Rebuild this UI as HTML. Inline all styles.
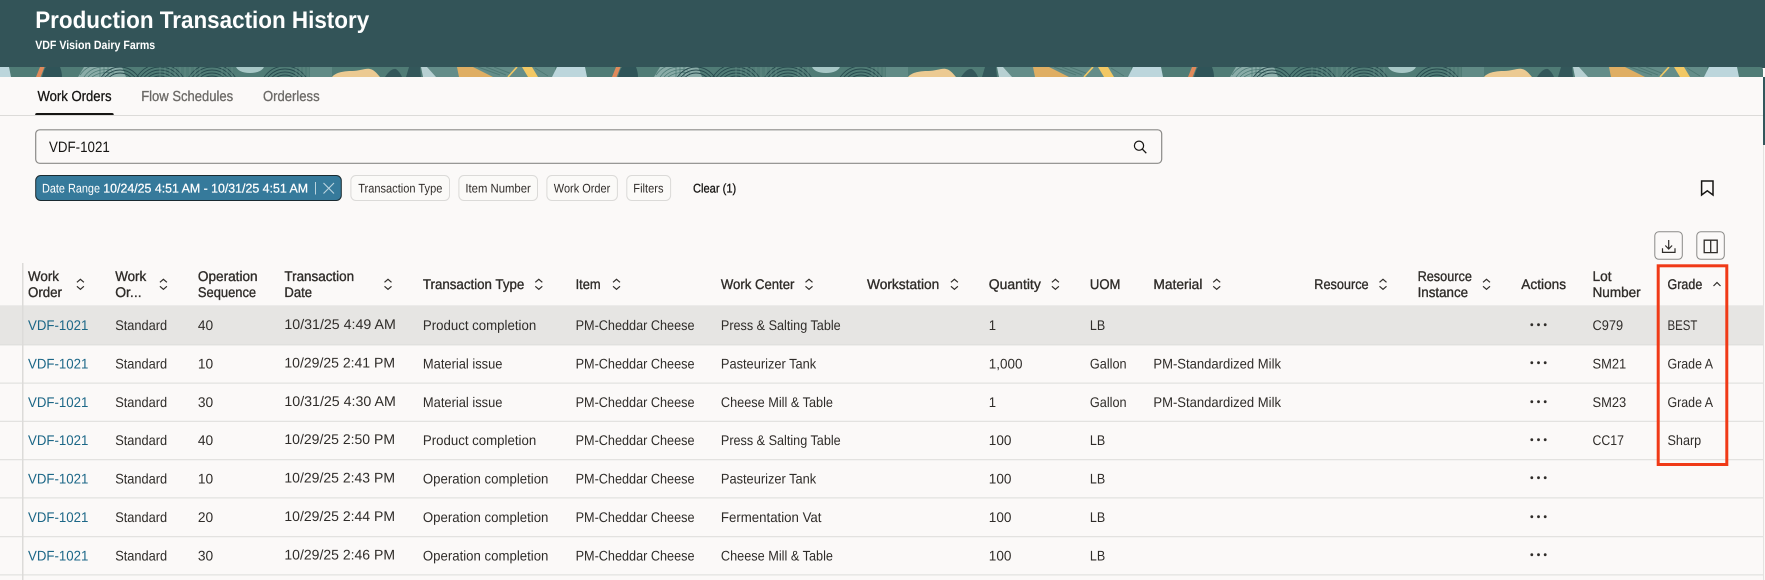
<!DOCTYPE html>
<html lang="en">
<head>
<meta charset="utf-8">
<title>Production Transaction History</title>
<style>
html,body{margin:0;padding:0;width:1765px;height:580px;overflow:hidden;background:#fbf9f8}
svg{display:block;position:absolute;left:0;top:0}
text{font-family:"Liberation Sans",sans-serif;font-size:14px;fill:#2f2c29;text-rendering:geometricPrecision}
.l{fill:#1c6787}
.h{stroke:#2f2c29;stroke-width:.35px}
.c{font-size:12.5px;fill:#312d2a}
.w{font-size:12.5px;fill:#fff}
.tab{font-size:14.5px;fill:#6b6966;stroke:#6b6966;stroke-width:.3px}
.ic{fill:none;stroke:#2f2c29;stroke-width:1.2}
</style>
</head>
<body>
<svg width="1765" height="580" viewBox="0 0 1765 580" xmlns="http://www.w3.org/2000/svg">
<defs>
<pattern id="bd" patternUnits="userSpaceOnUse" x="0" y="67" width="576" height="10">
<rect width="576" height="10" fill="#507c76"/>
<rect x="310" width="22" height="10" fill="#618b86"/>
<rect x="425" width="130" height="10" fill="#648d89"/>
<path d="M78 10 L84 0 H122 L126 10Z" fill="#8aaca8"/>
<g fill="none" stroke="#4f7c77" stroke-width=".8"><path d="M84 10Q92 -2 110 0M88 10Q96 1 112 3M92 10Q100 4 114 6M80 8Q88 -3 100 -2"/><path d="M100 0v10M104 0v10M108 0v10"/></g>
<g fill="none" stroke="#274a4e" stroke-width=".9"><circle cx="120" cy="22" r="16"/><circle cx="120" cy="22" r="19"/><circle cx="120" cy="22" r="22"/></g>
<g fill="none" stroke="#264a4e" stroke-width=".9"><circle cx="160" cy="24" r="15"/><circle cx="160" cy="24" r="18"/><circle cx="160" cy="24" r="21"/><circle cx="160" cy="24" r="24"/><circle cx="160" cy="24" r="27"/><circle cx="212" cy="24" r="15"/><circle cx="212" cy="24" r="18"/><circle cx="212" cy="24" r="21"/><circle cx="212" cy="24" r="24"/><circle cx="212" cy="24" r="27"/><circle cx="285" cy="24" r="16"/><circle cx="285" cy="24" r="19"/><circle cx="285" cy="24" r="22"/><circle cx="285" cy="24" r="25"/></g>
<g fill="none" stroke="#6f958f" stroke-width=".5"><path d="M160 0v10M165 0v10M170 0v10M175 0v10M180 0v10M185 0v10M190 0v10M195 0v10M200 0v10M222 0v10M227 0v10M232 0v10"/><path d="M296 0v10M300 0v10M304 0v10M308 0v10"/></g>
<ellipse cx="250" cy="-1" rx="14" ry="7" fill="#a7c7c6"/>
<path d="M36 10 L40 0 H44.500 L40.600 10Z" fill="#e08a5b"/>
<path d="M42 10 Q44 2 46 0 H60 Q62 5 62 10Z" fill="#2f5458"/>
<path d="M332 10 C336 5 345 4 352 4 C360 4 365 1 370 2 C375 3 378 8 380 10Z" fill="#ecca92"/>
<path d="M385 10 Q391 1 396 2 Q400 5 402 10Z" fill="#33575a"/>
<path d="M406 10 L409 0 H420 L421 10Z" fill="#33575a"/>
<path d="M421 0 H427 L436 10 H423Z" fill="#b7d0d2"/>
<path d="M457 0 H473 L493 10 H459Z" fill="#dfae63"/>
<g stroke="#4f7a75" stroke-width="1" fill="none"><path d="M478 0 L500 8M486 0 L506 8M494 0 L512 7M535 1 L548 9"/></g>
<path d="M517 0 L508 10" stroke="#f2c864" stroke-width="1.600" fill="none"/>
<path d="M522 0 H532 L538 10 H528Z" fill="#f2c864"/>
<path d="M557 0 H585 L587 10 H552Z" fill="#bcd6dc"/>
<path d="M-19 0 H9 L11 10 H-24Z" fill="#bcd6dc"/>
</pattern>
<g id="s"><path d="M-3.500 -2 L0 -5 L3.500 -2 M-3.500 2 L0 5 L3.500 2" class="ic" stroke-width="1.100"/></g>
<g id="d" fill="#2f2c29"><circle cx="1531.800" cy="0" r="1.400"/><circle cx="1538.500" cy="0" r="1.400"/><circle cx="1545.200" cy="0" r="1.400"/></g>
</defs>

<!-- header -->
<rect width="1765" height="68" fill="#335458"/>
<path d="M0 67 H1760 Q1763 67 1763 70 V77 H0Z" fill="url(#bd)"/>
<text x="35.200" y="28" textLength="334" lengthAdjust="spacingAndGlyphs" style="font-size:24px;font-weight:700;fill:#fff">Production Transaction History</text>
<text x="35.200" y="49" textLength="120" lengthAdjust="spacingAndGlyphs" style="font-size:12px;font-weight:700;fill:#fff">VDF Vision Dairy Farms</text>

<!-- tabs -->
<text x="37.500" y="101" textLength="74" lengthAdjust="spacingAndGlyphs" class="tab" style="fill:#161513;stroke:#161513">Work Orders</text>
<text x="141.200" y="101" textLength="92" lengthAdjust="spacingAndGlyphs" class="tab">Flow Schedules</text>
<text x="263" y="101" textLength="56.600" lengthAdjust="spacingAndGlyphs" class="tab">Orderless</text>
<rect x="0" y="115" width="1763" height="1" fill="#dcdbd9"/>
<path d="M35.200 115 V114.500 Q35.200 113 37 113 H112 Q113.700 113 113.700 114.500 V115Z" fill="#161513"/>
<rect x="1763" y="77" width="2" height="68" fill="#33575c"/>
<rect x="1763" y="145" width="1" height="435" fill="#e4e3e1"/>

<!-- search -->
<rect x="35.700" y="129.800" width="1126" height="33.500" rx="4" fill="#fbf9f8" stroke="#8b8a88" stroke-width="1.200"/>
<text x="49" y="152" textLength="60.800" lengthAdjust="spacingAndGlyphs" style="font-size:15px;fill:#161513">VDF-1021</text>
<circle cx="1139" cy="145.700" r="4.600" fill="none" stroke="#161513" stroke-width="1.200"/>
<path d="M1142.400 149.200 L1146.300 153.200" stroke="#161513" stroke-width="1.300" fill="none"/>

<!-- chips -->
<rect x="35.700" y="175.500" width="305.600" height="25" rx="5" fill="#367a9b" stroke="#1a2a30"/>
<text x="42" y="192.300" textLength="58" lengthAdjust="spacingAndGlyphs" class="w">Date Range</text>
<text x="103.300" y="192.300" textLength="204.700" lengthAdjust="spacingAndGlyphs" class="w" style="stroke:#fff;stroke-width:.25px">10/24/25 4:51 AM - 10/31/25 4:51 AM</text>
<rect x="315" y="182" width="1" height="12.500" fill="#b9d3de"/>
<path d="M323.500 183 L334 193.500 M334 183 L323.500 193.500" stroke="#bcd5e0" stroke-width="1.100" fill="none"/>
<g fill="#fbfaf8" stroke="#dbdad8">
<rect x="350.900" y="175.500" width="98.600" height="25" rx="5"/>
<rect x="458.900" y="175.500" width="78.600" height="25" rx="5"/>
<rect x="546.900" y="175.500" width="70.500" height="25" rx="5"/>
<rect x="626.800" y="175.500" width="43.800" height="25" rx="5"/>
</g>
<text x="358.200" y="192.300" textLength="84.200" lengthAdjust="spacingAndGlyphs" class="c">Transaction Type</text>
<text x="465.400" y="192.300" textLength="65.400" lengthAdjust="spacingAndGlyphs" class="c">Item Number</text>
<text x="553.800" y="192.300" textLength="56.500" lengthAdjust="spacingAndGlyphs" class="c">Work Order</text>
<text x="633.300" y="192.300" textLength="30.200" lengthAdjust="spacingAndGlyphs" class="c">Filters</text>
<text x="693" y="192.300" textLength="43.200" lengthAdjust="spacingAndGlyphs" class="c" style="fill:#161513;stroke:#161513;stroke-width:.3px">Clear (1)</text>
<path d="M1701.600 181 H1713 V195 L1707.300 190.800 L1701.600 195Z" fill="none" stroke="#161513" stroke-width="1.500"/>

<!-- toolbar buttons -->
<rect x="1654.800" y="231.800" width="27.500" height="27.500" rx="4" fill="#fbf9f8" stroke="#8b8a88"/>
<rect x="1696.800" y="231.800" width="27.500" height="27.500" rx="4" fill="#fbf9f8" stroke="#8b8a88"/>
<path d="M1668.700 240 V249 M1665.300 245.500 L1668.700 249 L1672.100 245.500 M1662.500 248.300 V252.400 H1675 V248.300" fill="none" stroke="#2f2c29" stroke-width="1.200"/>
<path d="M1704.200 240.200 H1717.200 V252.600 H1704.200Z M1710.700 240.200 V252.600" fill="none" stroke="#2f2c29" stroke-width="1.300"/>

<!-- table -->
<rect x="0" y="305.300" width="1763" height="39.400" fill="#e6e5e3"/>
<g fill="#dddcda">
<rect x="0" y="344.400" width="1763" height="1"/>
<rect x="0" y="382.600" width="1763" height="1"/>
<rect x="0" y="420.800" width="1763" height="1"/>
<rect x="0" y="459.200" width="1763" height="1"/>
<rect x="0" y="497.400" width="1763" height="1"/>
<rect x="0" y="536.200" width="1763" height="1"/>
<rect x="0" y="574.400" width="1763" height="1"/>
</g>
<rect x="22" y="263" width="1.500" height="317" fill="#dcdbd9"/>

<!-- table header -->
<text class="h" x="28" y="281" textLength="31" lengthAdjust="spacingAndGlyphs">Work</text>
<text class="h" x="28" y="297" textLength="34" lengthAdjust="spacingAndGlyphs">Order</text>
<text class="h" x="115.200" y="281" textLength="31" lengthAdjust="spacingAndGlyphs">Work</text>
<text class="h" x="115.200" y="297" textLength="26.400" lengthAdjust="spacingAndGlyphs">Or...</text>
<text class="h" x="197.900" y="281" textLength="59.700" lengthAdjust="spacingAndGlyphs">Operation</text>
<text class="h" x="197.900" y="297" textLength="58.200" lengthAdjust="spacingAndGlyphs">Sequence</text>
<text class="h" x="284.400" y="281" textLength="69.700" lengthAdjust="spacingAndGlyphs">Transaction</text>
<text class="h" x="284.400" y="297" textLength="27.600" lengthAdjust="spacingAndGlyphs">Date</text>
<text class="h" x="422.900" y="289" textLength="101.400" lengthAdjust="spacingAndGlyphs">Transaction Type</text>
<text class="h" x="575.600" y="289" textLength="25" lengthAdjust="spacingAndGlyphs">Item</text>
<text class="h" x="720.900" y="289" textLength="73.500" lengthAdjust="spacingAndGlyphs">Work Center</text>
<text class="h" x="867" y="289" textLength="72.300" lengthAdjust="spacingAndGlyphs">Workstation</text>
<text class="h" x="988.800" y="289" textLength="52" lengthAdjust="spacingAndGlyphs">Quantity</text>
<text class="h" x="1089.900" y="289" textLength="30.600" lengthAdjust="spacingAndGlyphs">UOM</text>
<text class="h" x="1153.400" y="289" textLength="49" lengthAdjust="spacingAndGlyphs">Material</text>
<text class="h" x="1314.300" y="289" textLength="54.300" lengthAdjust="spacingAndGlyphs">Resource</text>
<text class="h" x="1417.600" y="281" textLength="54.300" lengthAdjust="spacingAndGlyphs">Resource</text>
<text class="h" x="1417.600" y="297" textLength="50.500" lengthAdjust="spacingAndGlyphs">Instance</text>
<text class="h" x="1521.300" y="289" textLength="44.800" lengthAdjust="spacingAndGlyphs">Actions</text>
<text class="h" x="1592.500" y="281" textLength="19" lengthAdjust="spacingAndGlyphs">Lot</text>
<text class="h" x="1592.500" y="297" textLength="48.200" lengthAdjust="spacingAndGlyphs">Number</text>
<text class="h" x="1667.500" y="289" textLength="34.800" lengthAdjust="spacingAndGlyphs">Grade</text>
<use href="#s" x="80.400" y="284.300"/>
<use href="#s" x="163.400" y="284.300"/>
<use href="#s" x="388" y="284.300"/>
<use href="#s" x="538.800" y="284.300"/>
<use href="#s" x="616.500" y="284.300"/>
<use href="#s" x="809" y="284.300"/>
<use href="#s" x="954.400" y="284.300"/>
<use href="#s" x="1055.400" y="284.300"/>
<use href="#s" x="1216.700" y="284.300"/>
<use href="#s" x="1383" y="284.300"/>
<use href="#s" x="1486.500" y="284.300"/>
<path d="M1713.500 286 L1717 282.500 L1720.500 286" class="ic"/>

<!-- row 1 -->
<text class="l" x="28" y="330" textLength="60.400" lengthAdjust="spacingAndGlyphs">VDF-1021</text>
<text x="115.200" y="330" textLength="52" lengthAdjust="spacingAndGlyphs">Standard</text>
<text x="197.900" y="330" textLength="15.300" lengthAdjust="spacingAndGlyphs">40</text>
<text x="284.400" y="329" textLength="111.400" lengthAdjust="spacingAndGlyphs">10/31/25 4:49 AM</text>
<text x="422.900" y="330" textLength="113.300" lengthAdjust="spacingAndGlyphs">Product completion</text>
<text x="575.600" y="330" textLength="118.900" lengthAdjust="spacingAndGlyphs">PM-Cheddar Cheese</text>
<text x="720.900" y="330" textLength="119.800" lengthAdjust="spacingAndGlyphs">Press &amp; Salting Table</text>
<text x="988.800" y="330" textLength="7.300" lengthAdjust="spacingAndGlyphs">1</text>
<text x="1089.900" y="330" textLength="15.300" lengthAdjust="spacingAndGlyphs">LB</text>
<use href="#d" y="324.700"/>
<text x="1592.500" y="330" textLength="30.600" lengthAdjust="spacingAndGlyphs">C979</text>
<text x="1667.500" y="330" textLength="29.900" lengthAdjust="spacingAndGlyphs">BEST</text>

<!-- row 2 -->
<text class="l" x="28" y="368.400" textLength="60.400" lengthAdjust="spacingAndGlyphs">VDF-1021</text>
<text x="115.200" y="368.400" textLength="52" lengthAdjust="spacingAndGlyphs">Standard</text>
<text x="197.900" y="368.400" textLength="15.300" lengthAdjust="spacingAndGlyphs">10</text>
<text x="284.400" y="367.400" textLength="110.600" lengthAdjust="spacingAndGlyphs">10/29/25 2:41 PM</text>
<text x="422.900" y="368.400" textLength="79.600" lengthAdjust="spacingAndGlyphs">Material issue</text>
<text x="575.600" y="368.400" textLength="118.900" lengthAdjust="spacingAndGlyphs">PM-Cheddar Cheese</text>
<text x="720.900" y="368.400" textLength="95.300" lengthAdjust="spacingAndGlyphs">Pasteurizer Tank</text>
<text x="988.800" y="368.400" textLength="33.700" lengthAdjust="spacingAndGlyphs">1,000</text>
<text x="1089.900" y="368.400" textLength="36.700" lengthAdjust="spacingAndGlyphs">Gallon</text>
<text x="1153.400" y="368.400" textLength="127.600" lengthAdjust="spacingAndGlyphs">PM-Standardized Milk</text>
<use href="#d" y="362.700"/>
<text x="1592.500" y="368.400" textLength="33.700" lengthAdjust="spacingAndGlyphs">SM21</text>
<text x="1667.500" y="368.400" textLength="45.500" lengthAdjust="spacingAndGlyphs">Grade A</text>

<!-- row 3 -->
<text class="l" x="28" y="406.800" textLength="60.400" lengthAdjust="spacingAndGlyphs">VDF-1021</text>
<text x="115.200" y="406.800" textLength="52" lengthAdjust="spacingAndGlyphs">Standard</text>
<text x="197.900" y="406.800" textLength="15.300" lengthAdjust="spacingAndGlyphs">30</text>
<text x="284.400" y="405.800" textLength="111.400" lengthAdjust="spacingAndGlyphs">10/31/25 4:30 AM</text>
<text x="422.900" y="406.800" textLength="79.600" lengthAdjust="spacingAndGlyphs">Material issue</text>
<text x="575.600" y="406.800" textLength="118.900" lengthAdjust="spacingAndGlyphs">PM-Cheddar Cheese</text>
<text x="720.900" y="406.800" textLength="112.100" lengthAdjust="spacingAndGlyphs">Cheese Mill &amp; Table</text>
<text x="988.800" y="406.800" textLength="7.300" lengthAdjust="spacingAndGlyphs">1</text>
<text x="1089.900" y="406.800" textLength="36.700" lengthAdjust="spacingAndGlyphs">Gallon</text>
<text x="1153.400" y="406.800" textLength="127.600" lengthAdjust="spacingAndGlyphs">PM-Standardized Milk</text>
<use href="#d" y="401.700"/>
<text x="1592.500" y="406.800" textLength="33.700" lengthAdjust="spacingAndGlyphs">SM23</text>
<text x="1667.500" y="406.800" textLength="45.500" lengthAdjust="spacingAndGlyphs">Grade A</text>

<!-- row 4 -->
<text class="l" x="28" y="445.200" textLength="60.400" lengthAdjust="spacingAndGlyphs">VDF-1021</text>
<text x="115.200" y="445.200" textLength="52" lengthAdjust="spacingAndGlyphs">Standard</text>
<text x="197.900" y="445.200" textLength="15.300" lengthAdjust="spacingAndGlyphs">40</text>
<text x="284.400" y="444.200" textLength="110.600" lengthAdjust="spacingAndGlyphs">10/29/25 2:50 PM</text>
<text x="422.900" y="445.200" textLength="113.300" lengthAdjust="spacingAndGlyphs">Product completion</text>
<text x="575.600" y="445.200" textLength="118.900" lengthAdjust="spacingAndGlyphs">PM-Cheddar Cheese</text>
<text x="720.900" y="445.200" textLength="119.800" lengthAdjust="spacingAndGlyphs">Press &amp; Salting Table</text>
<text x="988.800" y="445.200" textLength="22.600" lengthAdjust="spacingAndGlyphs">100</text>
<text x="1089.900" y="445.200" textLength="15.300" lengthAdjust="spacingAndGlyphs">LB</text>
<use href="#d" y="439.700"/>
<text x="1592.500" y="445.200" textLength="31.400" lengthAdjust="spacingAndGlyphs">CC17</text>
<text x="1667.500" y="445.200" textLength="33.700" lengthAdjust="spacingAndGlyphs">Sharp</text>

<!-- row 5 -->
<text class="l" x="28" y="483.600" textLength="60.400" lengthAdjust="spacingAndGlyphs">VDF-1021</text>
<text x="115.200" y="483.600" textLength="52" lengthAdjust="spacingAndGlyphs">Standard</text>
<text x="197.900" y="483.600" textLength="15.300" lengthAdjust="spacingAndGlyphs">10</text>
<text x="284.400" y="482.600" textLength="110.600" lengthAdjust="spacingAndGlyphs">10/29/25 2:43 PM</text>
<text x="422.900" y="483.600" textLength="125.500" lengthAdjust="spacingAndGlyphs">Operation completion</text>
<text x="575.600" y="483.600" textLength="118.900" lengthAdjust="spacingAndGlyphs">PM-Cheddar Cheese</text>
<text x="720.900" y="483.600" textLength="95.300" lengthAdjust="spacingAndGlyphs">Pasteurizer Tank</text>
<text x="988.800" y="483.600" textLength="22.600" lengthAdjust="spacingAndGlyphs">100</text>
<text x="1089.900" y="483.600" textLength="15.300" lengthAdjust="spacingAndGlyphs">LB</text>
<use href="#d" y="477.700"/>

<!-- row 6 -->
<text class="l" x="28" y="522" textLength="60.400" lengthAdjust="spacingAndGlyphs">VDF-1021</text>
<text x="115.200" y="522" textLength="52" lengthAdjust="spacingAndGlyphs">Standard</text>
<text x="197.900" y="522" textLength="15.300" lengthAdjust="spacingAndGlyphs">20</text>
<text x="284.400" y="521" textLength="110.600" lengthAdjust="spacingAndGlyphs">10/29/25 2:44 PM</text>
<text x="422.900" y="522" textLength="125.500" lengthAdjust="spacingAndGlyphs">Operation completion</text>
<text x="575.600" y="522" textLength="118.900" lengthAdjust="spacingAndGlyphs">PM-Cheddar Cheese</text>
<text x="720.900" y="522" textLength="100.600" lengthAdjust="spacingAndGlyphs">Fermentation Vat</text>
<text x="988.800" y="522" textLength="22.600" lengthAdjust="spacingAndGlyphs">100</text>
<text x="1089.900" y="522" textLength="15.300" lengthAdjust="spacingAndGlyphs">LB</text>
<use href="#d" y="516.700"/>

<!-- row 7 -->
<text class="l" x="28" y="560.400" textLength="60.400" lengthAdjust="spacingAndGlyphs">VDF-1021</text>
<text x="115.200" y="560.400" textLength="52" lengthAdjust="spacingAndGlyphs">Standard</text>
<text x="197.900" y="560.400" textLength="15.300" lengthAdjust="spacingAndGlyphs">30</text>
<text x="284.400" y="559.400" textLength="110.600" lengthAdjust="spacingAndGlyphs">10/29/25 2:46 PM</text>
<text x="422.900" y="560.400" textLength="125.500" lengthAdjust="spacingAndGlyphs">Operation completion</text>
<text x="575.600" y="560.400" textLength="118.900" lengthAdjust="spacingAndGlyphs">PM-Cheddar Cheese</text>
<text x="720.900" y="560.400" textLength="112.100" lengthAdjust="spacingAndGlyphs">Cheese Mill &amp; Table</text>
<text x="988.800" y="560.400" textLength="22.600" lengthAdjust="spacingAndGlyphs">100</text>
<text x="1089.900" y="560.400" textLength="15.300" lengthAdjust="spacingAndGlyphs">LB</text>
<use href="#d" y="554.700"/>

<!-- red highlight -->
<rect x="1658.200" y="265.800" width="68.600" height="198.700" fill="none" stroke="#f03a17" stroke-width="3"/>
</svg>
</body>
</html>
